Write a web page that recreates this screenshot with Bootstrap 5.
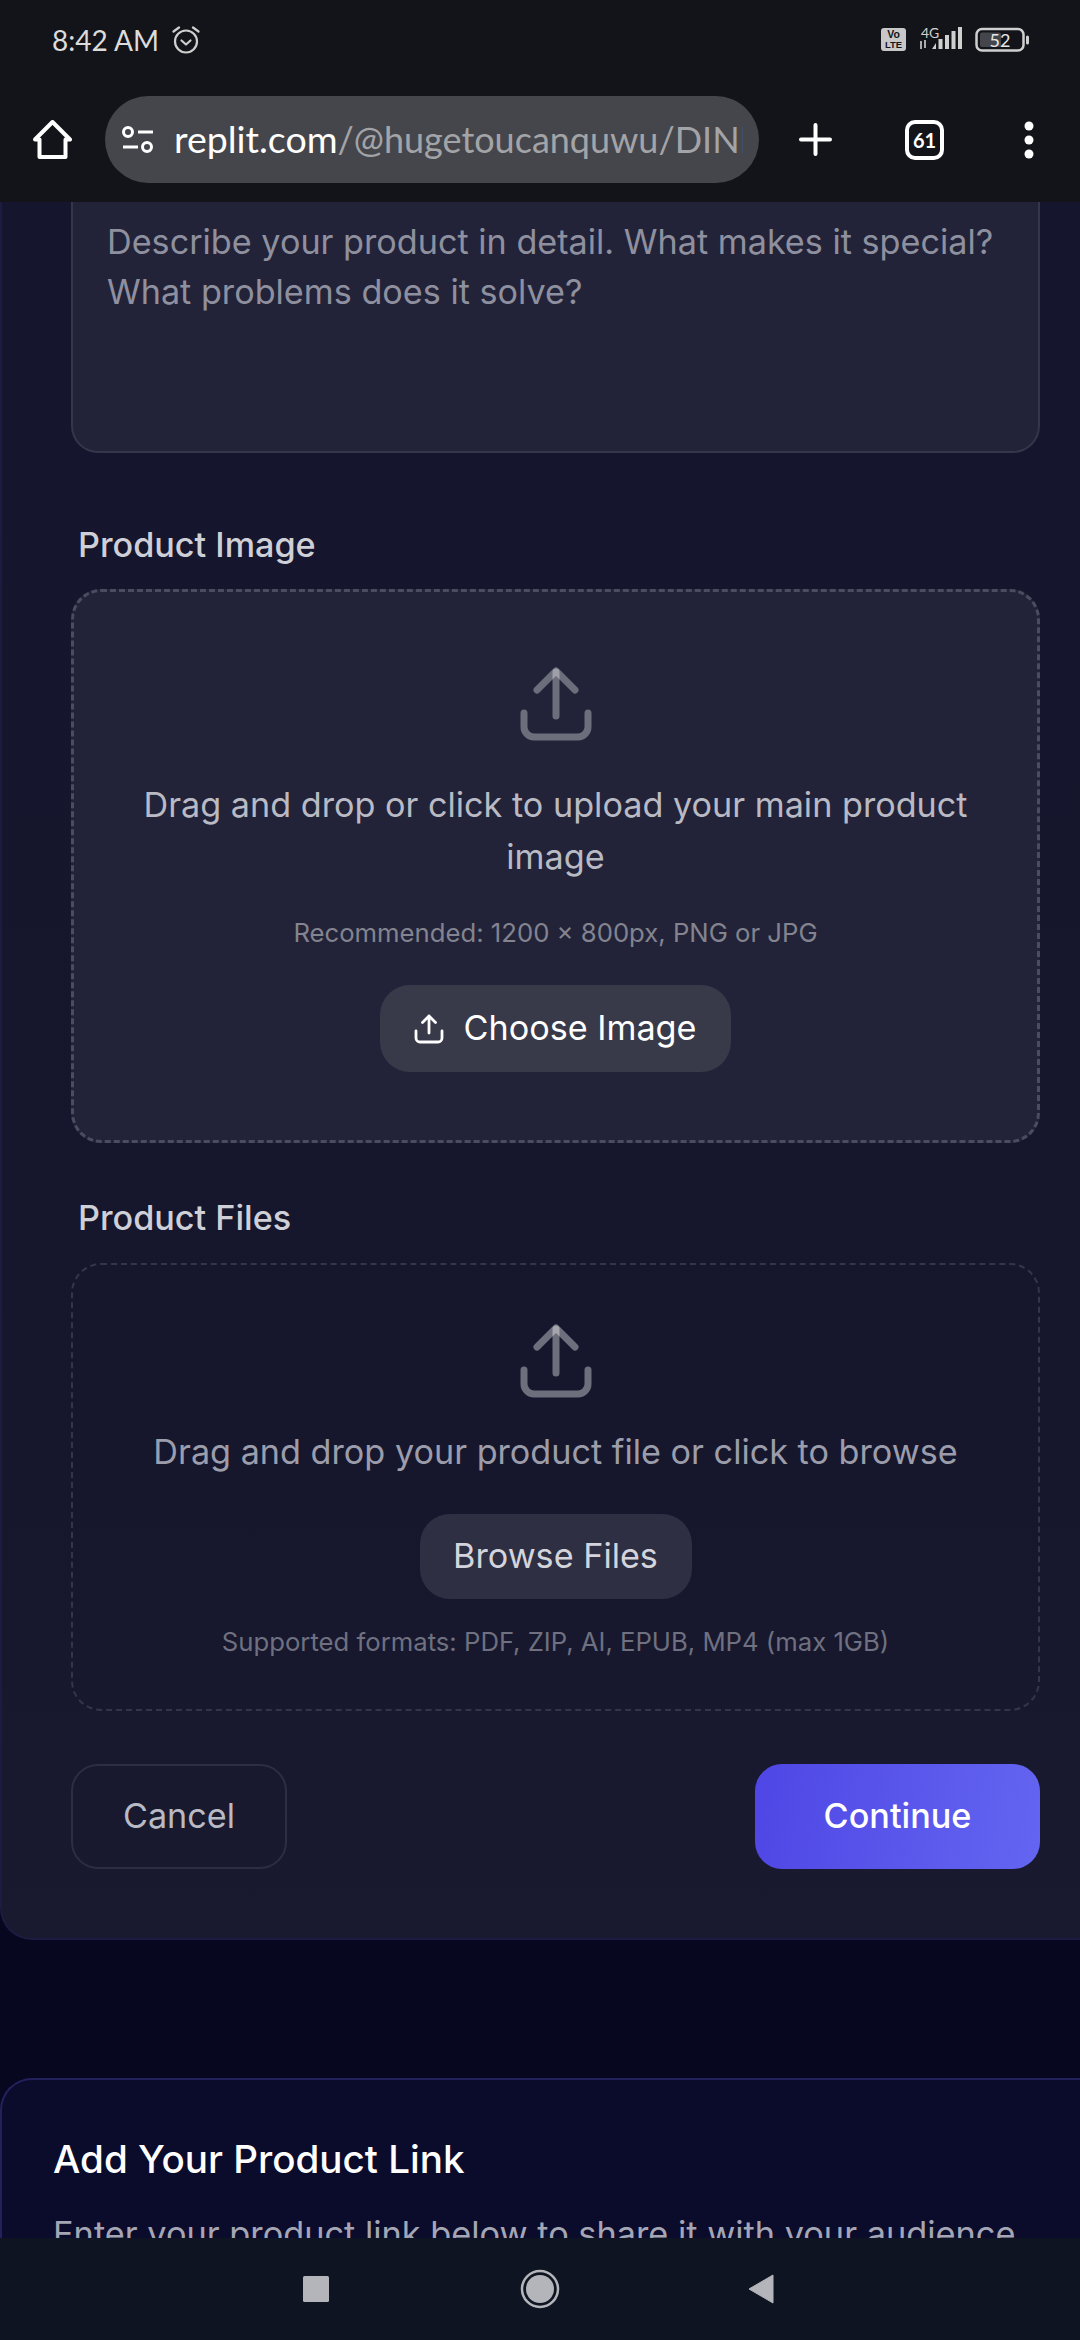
<!DOCTYPE html>
<html lang="en">
<head>
    <meta charset="UTF-8">
    <meta name="viewport" content="width=device-width, initial-scale=1.0">
    <title>Add Product - Replit</title>
    <link href="https://cdn.jsdelivr.net/npm/bootstrap@5.3.0/dist/css/bootstrap.min.css" rel="stylesheet">
    <style>
        body { width: 1080px; height: 2340px; overflow: hidden; background: #07071f; font-family: "Inter", "Liberation Sans", sans-serif; }

        /* phone + browser chrome */
        .status-row { height: 80px; background: #131419; padding: 0 51px 0 52px; color: #dcdcdc; font-family: "Lato", "Noto Sans", sans-serif; font-size: 28px; }
        .alarm-icon { margin-left: 13px; }
        .browser-row { height: 122px; background: #131419; padding: 0 0 3px 33px; }
        .url-pill { width: 654px; height: 87px; margin-left: 33px; padding: 0 16px 0 17px; background: #45464b; border-radius: 44px; font-family: "Lato", "Noto Sans", sans-serif; font-size: 36px; color: #a3a4a7; }
        .url-text { margin-left: 20px; overflow: hidden; white-space: nowrap; flex: 1; }
        .url-text b { font-size: 37.5px; font-weight: 400; color: #fff; }
        .plus-icon { margin-left: 40px; }
        .tabs-icon { margin-left: 73px; }
        .dots-icon { margin-left: 80px; }
        .bottom-nav { height: 102px; background: #0e1421; padding-bottom: 0; }

        /* page */
        .page-view { height: 2036px; overflow: hidden; }
        .form-panel { height: 1738px; background: linear-gradient(180deg, #15162d, #16172d 75%, #191a2f); border: 2px solid #1c1c42; border-top: 0; border-right: 0; border-bottom-left-radius: 32px; padding: 0 40px 0 69px; }
        .desc-box { height: 251px; padding: 15px 35px 0 34px; background: #222338; border: 2px solid #35364b; border-top: 0; border-radius: 0 0 27px 27px; font-size: 34.2px; line-height: 49.5px; color: #8f909f; }
        .field-label { margin: 0; padding-left: 7px; font-size: 34.2px; line-height: 48px; font-weight: 500; color: #cfd0d7; }
        .label-image { margin-top: 68px; margin-bottom: 20px; }
        .label-files { margin-top: 51px; margin-bottom: 21px; }
        .drop-main { height: 554px; padding-top: 72px; background: #222338; border: 3px dashed #4b4c5f; border-radius: 30px; }
        .drop-files { height: 448px; padding-top: 56px; border: 2px dashed #34354a; border-radius: 30px; }
        .drop-text { font-size: 34.2px; line-height: 52px; margin: 0; }
        .drop-main .drop-text { margin-top: 35px; padding: 0 40px; color: #b9bac4; }
        .drop-files .drop-text { margin-top: 25px; color: #9c9dab; }
        .hint-text { margin: 0; font-size: 25.7px; line-height: 36px; }
        .drop-main .hint-text { margin-top: 32px; color: #83848f; }
        .drop-files .hint-text { margin-top: 25px; color: #6f7080; }
        .upload-btn { font-size: 34.2px; line-height: 1; border: 0; border-radius: 30px; }
        .upload-btn:hover { color: inherit; }
        .btn-choose { width: 351px; height: 87px; margin-top: 34px; gap: 19px; background: #383949; color: #fff; }
        .btn-browse { width: 272px; height: 85px; margin-top: 36px; background: #2e2f43; color: #d4d5dc; }
        .action-row { margin-top: 53px; }
        .action-btn { height: 105px; font-size: 34.2px; line-height: 1; border-radius: 27px; }
        .btn-cancel { width: 216px; background: transparent; border: 2px solid #2d2e41; color: #b9bac4; }
        .btn-continue { width: 285px; border: 0; background: linear-gradient(100deg, #4f46e5, #6366f1); color: #fff; font-weight: 500; }
        .link-panel { margin-top: 138px; height: 300px; padding: 51px 0 0 51px; background: #0b0b2c; border: 2px solid #23215c; border-right: 0; border-bottom: 0; border-top-left-radius: 32px; }
        .link-title { margin: 0; font-size: 38.6px; line-height: 56px; font-weight: 500; color: #fff; }
        .link-sub { margin: 22px 0 0; font-size: 34.3px; line-height: 50px; color: #a5a6b4; white-space: nowrap; }
    </style>
</head>
<body class="d-flex flex-column">
    <!-- status bar -->
    <div class="status-row d-flex align-items-center">
        <span>8:42 AM</span>
        <svg class="alarm-icon" width="28" height="30" viewBox="0 0 28 30" fill="none" stroke="#cfcfcf" stroke-width="2.2" stroke-linecap="round" stroke-linejoin="round">
            <circle cx="14" cy="16.5" r="11"/>
            <path d="M9.5 15.5l4.5 4 4.5-4"/>
            <path d="M1.5 6.5L7 2.5M26.5 6.5L21 2.5"/>
        </svg>
        <div class="ms-auto d-flex align-items-center">
            <svg width="148" height="36" viewBox="0 -5 148 36">
                <rect x="0" y="1" width="25" height="23" rx="3" fill="#c8c8c8"/>
                <text x="12.5" y="11" text-anchor="middle" font-family="Liberation Sans, sans-serif" font-size="10.5" font-weight="700" fill="#131419">Vo</text>
                <text x="12.5" y="21" text-anchor="middle" font-family="Liberation Sans, sans-serif" font-size="9.5" font-weight="700" fill="#131419">LTE</text>
                <text x="40" y="11" font-family="Lato, sans-serif" font-size="14" fill="#d0d0d0">4G</text>
                <path d="M40 14v8M44 13v8" stroke="#d0d0d0" stroke-width="1.6"/>
                <path d="M51 22h4v-6zM57.500 22h4V12h-4zM64 22h4V8h-4zM70.500 22h4V4h-4zM77 22h4V0h-4z" fill="#d0d0d0"/>
                <rect x="95.500" y="2" width="47" height="21.500" rx="5.500" fill="none" stroke="#cfcfcf" stroke-width="2.500"/>
                <rect x="99" y="5.500" width="21" height="14.500" rx="2" fill="#45464b"/>
                <rect x="145" y="8.500" width="3" height="9" rx="1.500" fill="#cfcfcf"/>
                <text x="119" y="19.500" text-anchor="middle" font-family="Lato, sans-serif" font-size="18" fill="#e6e6e6">52</text>
            </svg>
        </div>
    </div>

    <!-- browser toolbar -->
    <div class="browser-row d-flex align-items-center">
        <svg width="39" height="39" viewBox="0 0 39 39" fill="none" stroke="#fff" stroke-width="4" stroke-linejoin="round" stroke-linecap="round">
            <path d="M2 19.500L19.500 2 37 19.500h-4.500V37h-26V19.500z"/>
        </svg>
        <div class="url-pill d-flex align-items-center">
            <svg width="32" height="28" viewBox="0 0 32 28" fill="none" stroke="#fff" stroke-width="3">
                <circle cx="6" cy="6" r="4.500"/>
                <path d="M16 6h15M1 21h15"/>
                <circle cx="25" cy="21" r="4.500"/>
            </svg>
            <div class="url-text"><b>replit.com</b>/@hugetoucanquwu/DINIG</div>
        </div>
        <svg class="plus-icon" width="33" height="33" viewBox="0 0 33 33" stroke="#fff" stroke-width="4" stroke-linecap="round">
            <path d="M16.500 2v29M2 16.500h29"/>
        </svg>
        <svg class="tabs-icon" width="39" height="40" viewBox="0 0 39 40">
            <rect x="2" y="2" width="35" height="36" rx="8" fill="none" stroke="#fff" stroke-width="4"/>
            <text x="19.500" y="27.500" text-anchor="middle" font-family="Lato, sans-serif" font-size="20" font-weight="700" fill="#fff">61</text>
        </svg>
        <svg class="dots-icon" width="10" height="40" viewBox="0 0 10 40" fill="#fff">
            <circle cx="5" cy="6" r="4.500"/>
            <circle cx="5" cy="20" r="4.500"/>
            <circle cx="5" cy="34" r="4.500"/>
        </svg>
    </div>

    <!-- page content -->
    <div class="page-view">
        <div class="form-panel">
            <div class="desc-box">Describe your product in detail. What makes it special? What problems does it solve?</div>

            <label class="field-label label-image d-block">Product Image</label>
            <div class="drop-main text-center">
                <svg width="80" height="80" viewBox="0 0 80 80" fill="none" stroke="#fff" stroke-opacity=".34" stroke-width="7" stroke-linecap="round">
                    <path d="M40 8v44"/>
                    <path d="M21 26L40 7l19 19" stroke-linejoin="round"/>
                    <path d="M8 49v14a10 10 0 0 0 10 10h44a10 10 0 0 0 10-10V49"/>
                </svg>
                <p class="drop-text">Drag and drop or click to upload your main product image</p>
                <p class="hint-text">Recommended: 1200 × 800px, PNG or JPG</p>
                <button type="button" class="btn upload-btn btn-choose d-inline-flex align-items-center justify-content-center">
                    <svg width="30" height="30" viewBox="0 0 30 30" fill="none" stroke="#fff" stroke-width="2.800" stroke-linecap="round" stroke-linejoin="round">
                        <path d="M15 2v17M8.500 8.500L15 2l6.500 6.500"/>
                        <path d="M2 17v7a4 4 0 0 0 4 4h18a4 4 0 0 0 4-4v-7"/>
                    </svg>
                    Choose Image
                </button>
            </div>

            <label class="field-label label-files d-block">Product Files</label>
            <div class="drop-files text-center">
                <svg width="80" height="80" viewBox="0 0 80 80" fill="none" stroke="#fff" stroke-opacity=".38" stroke-width="7" stroke-linecap="round">
                    <path d="M40 8v44"/>
                    <path d="M21 26L40 7l19 19" stroke-linejoin="round"/>
                    <path d="M8 49v14a10 10 0 0 0 10 10h44a10 10 0 0 0 10-10V49"/>
                </svg>
                <p class="drop-text">Drag and drop your product file or click to browse</p>
                <button type="button" class="btn upload-btn btn-browse">Browse Files</button>
                <p class="hint-text">Supported formats: PDF, ZIP, AI, EPUB, MP4 (max 1GB)</p>
            </div>

            <div class="action-row d-flex justify-content-between">
                <button type="button" class="btn action-btn btn-cancel">Cancel</button>
                <button type="button" class="btn action-btn btn-continue">Continue</button>
            </div>
        </div>

        <div class="link-panel">
            <h2 class="link-title">Add Your Product Link</h2>
            <p class="link-sub">Enter your product link below to share it with your audience</p>
        </div>
    </div>

    <!-- android nav -->
    <div class="bottom-nav d-flex align-items-center position-relative">
        <svg class="d-block" width="1080" height="102" viewBox="0 0 1080 102">
            <rect x="303" y="38" width="26" height="26" rx="1.500" fill="#b4b5ba"/>
            <circle cx="540" cy="51" r="18" fill="none" stroke="#b4b5ba" stroke-width="2.500"/>
            <circle cx="540" cy="51" r="14" fill="#b4b5ba"/>
            <path d="M773 37v28l-24-14z" fill="#b4b5ba" stroke="#b4b5ba" stroke-width="1" stroke-linejoin="round"/>
        </svg>
    </div>

    <script src="https://cdn.jsdelivr.net/npm/bootstrap@5.3.0/dist/js/bootstrap.bundle.min.js"></script>
</body>
</html>
